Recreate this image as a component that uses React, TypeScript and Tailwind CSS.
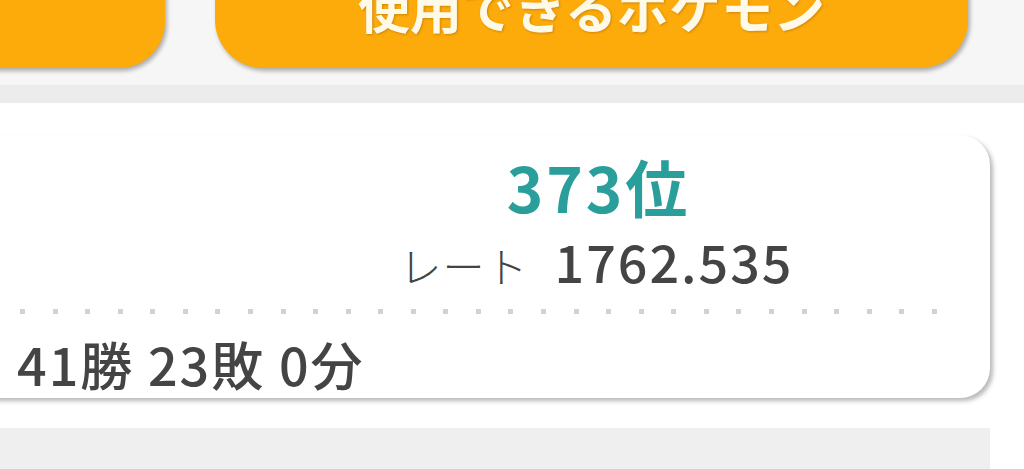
import React from 'react';

const FONT = { fontFamily: '"Noto Sans CJK JP", "Liberation Sans", sans-serif' };

export default function App() {
  const dots = Array.from({ length: 29 });

  return (
    <div className="w-[1024px] h-[469px] overflow-hidden bg-white" style={FONT}>
      {/* Top buttons */}
      <div className="bg-[#f6f6f6] h-[85px] flow-root">
        <div className="flex gap-[50px] -mt-[50px]">
          <div className="w-[215px] -ml-[50px] h-[118px] rounded-[46px] bg-[#fdab0a] shadow-[2px_3px_4px_rgba(0,0,0,0.3)]" />
          <div className="w-[753px] h-[118px] rounded-[48px] bg-[#fdab0a] shadow-[2px_3px_4px_rgba(0,0,0,0.3)] flex items-end justify-center">
            <span className="text-[52px] font-bold leading-none text-[#fff9e8] mb-[35px] drop-shadow-[1px_1px_1px_rgba(140,80,0,0.4)]">
              使用できるポケモン
            </span>
          </div>
        </div>
      </div>
      <div className="h-[18px] bg-[#ececec]" />

      {/* Ranking card */}
      <div className="pt-[32px]">
        <div className="-ml-[40px] w-[1030px] h-[263px] bg-white rounded-[30px] shadow-[3px_3px_4px_rgba(0,0,0,0.28)] flex flex-col">
          <div className="flex">
            <div className="w-[283px]" />
            <div className="flex-1 flex flex-col items-center pt-[20px]">
              <div className="text-[62px] font-bold leading-none text-[#2a9e9b] tracking-[3px] pl-[4px]">373位</div>
              <div className="flex items-baseline mt-[18px] text-[#444]">
                <span className="text-[42px] font-light leading-none tracking-[1px]">レート</span>
                <span className="text-[52px] font-medium leading-none ml-[26px] tracking-[2px]">1762.535</span>
              </div>
            </div>
            <div className="w-[40px]" />
          </div>
          <div className="flex justify-between pl-[60px] pr-[53px] mt-[22px]">
            {dots.map((_, i) => (
              <div key={i} className="w-[5px] h-[5px] bg-[#d2d2d2]" />
            ))}
          </div>
          <div className="pl-[57px] mt-[24px] text-[52px] font-medium leading-none text-[#444] tracking-[2px]">
            41勝 23敗 0分
          </div>
        </div>
      </div>

      <div className="h-[30px]" />
      <div className="w-[990px] h-[45px] bg-[#efefef]" />
    </div>
  );
}
